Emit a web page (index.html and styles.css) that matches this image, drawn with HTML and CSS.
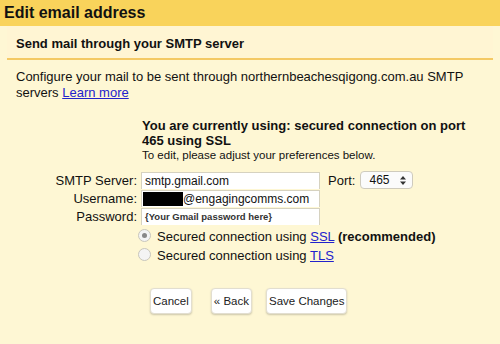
FILE: index.html
```html
<!DOCTYPE html>
<html lang="en">
<head>
    <meta charset="UTF-8">
    <title>Edit email address</title>
    <link rel="stylesheet" href="styles.css">
</head>
<body>
    <div class="title-bar">Edit email address</div>
    <div class="sub-bar">
        <h2>Send mail through your SMTP server</h2>
    </div>
    <div class="content">
        <p class="intro">Configure your mail to be sent through northernbeachesqigong.com.au SMTP servers <a href="#">Learn more</a></p>

        <div class="status">
            <p class="status-title">You are currently using: secured connection on port 465 using SSL</p>
            <p class="status-note">To edit, please adjust your preferences below.</p>
        </div>

        <div class="form">
            <div class="row">
                <label>SMTP Server:</label>
                <div class="field">smtp.gmail.com</div>
                <label class="port-label">Port:</label>
                <div class="select">465 <span class="arrows"><svg width="6" height="9" viewBox="0 0 6 9"><path d="M3 0 L6 3.5 L0 3.5 Z M0 5.5 L6 5.5 L3 9 Z" fill="#333"/></svg></span></div>
            </div>
            <div class="row">
                <label>Username:</label>
                <div class="field"><span class="redact"></span>@engagingcomms.com</div>
            </div>
            <div class="row">
                <label>Password:</label>
                <div class="field password">{Your Gmail password here}</div>
            </div>
            <div class="radios">
                <div class="radio-row"><span class="radio checked"></span>Secured connection using <a href="#">SSL</a> <b>(recommended)</b></div>
                <div class="radio-row"><span class="radio"></span>Secured connection using <a href="#">TLS</a></div>
            </div>
            <div class="buttons">
                <button class="btn">Cancel</button>
                <button class="btn back">&laquo; Back</button>
                <button class="btn">Save Changes</button>
            </div>
        </div>
    </div>
</body>
</html>
```
FILE: styles.css
```css
body {
    margin: 0;
    background: #fef7d4;
    font-family: "Liberation Sans", Arial, sans-serif;
    color: #111;
    width: 500px;
    height: 344px;
    overflow: hidden;
}
.title-bar {
    background: #f9d35b;
    height: 26px;
    line-height: 26px;
    padding-left: 4px;
    font-size: 16px;
    font-weight: bold;
}
.sub-bar {
    background: #fff5d3;
    margin: 0 7px;
    height: 32px;
    border-bottom: 2px solid #f4c964;
}
.sub-bar h2 {
    margin: 0;
    padding-left: 9px;
    font-size: 13px;
    line-height: 35px;
}
.content {
    padding: 9px 0 0 16px;
}
.intro {
    margin: 0;
    font-size: 13px;
    line-height: 16px;
    width: 470px;
}
a {
    color: #2222cc;
}
.status {
    margin: 17px 0 0 126px;
}
.status-title {
    margin: 0;
    font-size: 13px;
    font-weight: bold;
    line-height: 15px;
    width: 330px;
}
.status-note {
    margin: 0;
    font-size: 11.5px;
    line-height: 14px;
}
.form {
    margin-top: 9px;
}
.row {
    display: flex;
    align-items: center;
    height: 18px;
    font-size: 13px;
}
.row label {
    width: 121px;
    text-align: right;
    padding-right: 4px;
}
.field {
    width: 174px;
    height: 16px;
    background: #fff;
    border: 1px solid #d6d2c0;
    border-bottom: none;
    font-size: 12px;
    line-height: 16px;
    padding-left: 3px;
    display: flex;
    align-items: center;
}
.row:last-of-type .field {
    border-bottom: 1px solid #d6d2c0;
}
.password {
    font-size: 9.5px;
    font-weight: bold;
    color: #333;
}
.redact {
    display: inline-block;
    width: 40px;
    height: 14px;
    background: #000;
    margin-left: -2px;
}
.port-label {
    width: auto !important;
    padding: 0 !important;
    margin: 0 5px 0 8px;
}
.select {
    width: 43px;
    height: 16px;
    background: #fbfbfb;
    border: 1px solid #cfcbbd;
    border-radius: 4px;
    font-size: 12px;
    line-height: 16px;
    padding-left: 8px;
    display: flex;
    justify-content: space-between;
    align-items: center;
}
.arrows {
    display: flex;
    padding-right: 6px;
}
.radios {
    margin: 2px 0 0 122px;
    font-size: 13px;
}
.radio-row {
    height: 19px;
    line-height: 19px;
}
.radio {
    display: inline-block;
    vertical-align: -1px;
    width: 11px;
    height: 11px;
    border-radius: 50%;
    border: 1px solid #c8c6bc;
    background: #f4f4f4;
    margin-right: 6px;
    position: relative;
}
.radio.checked::after {
    content: "";
    position: absolute;
    left: 3px;
    top: 3px;
    width: 5px;
    height: 5px;
    border-radius: 50%;
    background: #888;
}
.buttons {
    display: flex;
    margin: 23px 0 0 134px;
}
.btn {
    font-family: "Liberation Sans", Arial, sans-serif;
    font-size: 11.5px;
    color: #222;
    background: #fff;
    border: 1px solid #e2ded0;
    border-radius: 4px;
    box-shadow: 0 1px 2px rgba(0, 0, 0, 0.2);
    height: 26px;
    padding: 0 2px;
    margin-right: 19px;
}
.btn.back {
    margin-right: 14px;
}
```
